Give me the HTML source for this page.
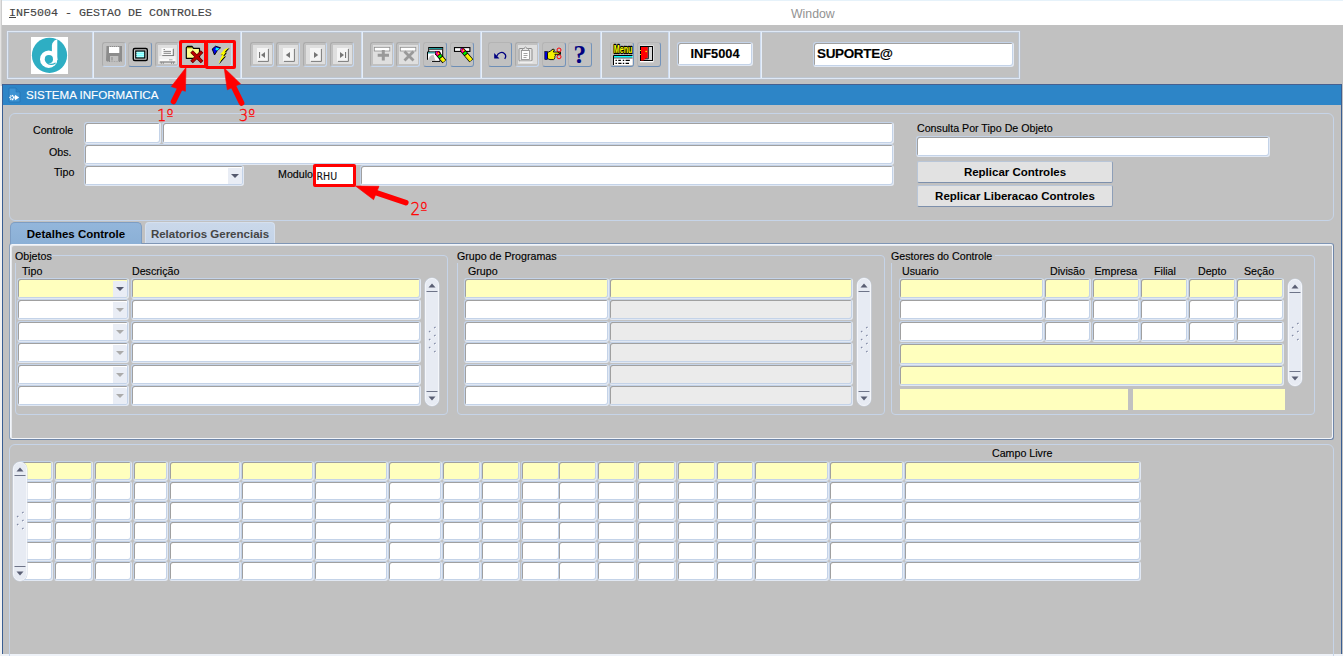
<!DOCTYPE html>
<html lang="pt-BR"><head><meta charset="utf-8"><title>INF5004 - GESTAO DE CONTROLES</title>
<style>
html,body{margin:0;padding:0}
body{width:1343px;height:656px;overflow:hidden;position:relative;background:#C1C1C1;font-family:"Liberation Sans",sans-serif;color:#000}
div,span,svg{position:absolute;box-sizing:border-box}
.t{white-space:nowrap;display:block;-webkit-text-stroke:.13px currentColor}
.f{background:#fff;border:1px solid;border-color:#C4D3E8 #E1E8F3 #E1E8F3 #C4D3E8;border-radius:3px;box-shadow:inset 1px 1px 0 #A0A0A0,inset -1px -1px 0 #C4D3E8}
.y{background:#FFFFBE}
.d{background:#EBEBEB}
.cb i{position:absolute;right:1px;top:2px;bottom:1px;width:14px;background:#E9EDF5;border-radius:0 2px 2px 0}
.cb i:after{content:"";position:absolute;left:3px;top:50%;margin-top:-2px;border:4px solid transparent;border-top:4.5px solid #555A6E;border-bottom:0}
.cb.dis i:after{border-top-color:#ABABAB}

.tb{border:1px solid;border-radius:3px;width:24px;height:25px;top:42px}
.tb.en{border-color:#B4B4B4 #7393BA #6D8EB6 #B4B4B4}
.tb.di{border-color:#ABABAB #C6D8F0 #C6D8F0 #ABABAB}
.tb.lt:before{content:"";position:absolute;left:2px;top:2px;right:1px;bottom:2px;background:#DFDFDF}
.tb svg{left:-1px;top:-1px}

</style></head><body>
<div class="" style="left:0px;top:0px;width:1343px;height:1px;background:#E6F2FA"></div>
<div class="" style="left:2px;top:1px;width:1341px;height:24px;background:#fff"></div>
<div class="" style="left:0px;top:0px;width:2px;height:86px;background:linear-gradient(90deg,#E3E3E3 55%,#CDCDCD 55%)"></div>
<div class="" style="left:0px;top:86px;width:2px;height:570px;background:#F2F2F2"></div>
<span class="t" style="left:9px;top:7.1px;font-family:'Liberation Mono',monospace;font-size:11.67px;line-height:12px;color:#444"><u>I</u>NF5004 - GESTAO DE CONTROLES</span>
<span class="t" style="left:791px;top:7.89px;font-size:12.3px;line-height:12.3px;color:#929292;-webkit-text-stroke:0">Window</span>
<div class="" style="left:7px;top:31px;width:1013px;height:48px;border:1px solid #DEE8F6;box-shadow:inset 0 0 0 1px rgba(185,203,230,.45),0 0 0 .5px rgba(185,203,230,.4)"></div>
<div class="" style="left:92px;top:32px;width:2px;height:46px;background:linear-gradient(90deg,#CFDCEF 50%,#E6EEF9 50%)"></div>
<div class="" style="left:240px;top:32px;width:2px;height:46px;background:linear-gradient(90deg,#CFDCEF 50%,#E6EEF9 50%)"></div>
<div class="" style="left:361px;top:32px;width:2px;height:46px;background:linear-gradient(90deg,#CFDCEF 50%,#E6EEF9 50%)"></div>
<div class="" style="left:480px;top:32px;width:2px;height:46px;background:linear-gradient(90deg,#CFDCEF 50%,#E6EEF9 50%)"></div>
<div class="" style="left:600px;top:32px;width:2px;height:46px;background:linear-gradient(90deg,#CFDCEF 50%,#E6EEF9 50%)"></div>
<div class="" style="left:668px;top:32px;width:2px;height:46px;background:linear-gradient(90deg,#CFDCEF 50%,#E6EEF9 50%)"></div>
<div class="" style="left:760px;top:32px;width:2px;height:46px;background:linear-gradient(90deg,#CFDCEF 50%,#E6EEF9 50%)"></div>
<div class="" style="left:31px;top:37px;width:37px;height:37px;background:#fff"></div>
<svg style="left:31px;top:37px" width="37" height="37" viewBox="0 0 37 37"><circle cx="18.5" cy="18.3" r="17.6" fill="#2EAEC3"/>
<circle cx="17.700" cy="22.200" r="8.700" fill="#fff"/>
<path d="M20.900 15V8.500c0-2.600 2-5 4.600-6 .4-.1.800-.1.800.3V23h-5.400z" fill="#fff"/>
<circle cx="17.900" cy="22.200" r="4.100" fill="#2EAEC3"/>
<path d="M15.800 25.600c2.200 2.300 6 2.100 8.300.6" fill="none" stroke="#2EAEC3" stroke-width="1.300" stroke-linecap="round"/></svg>
<div class="" style="left:2px;top:84px;width:1340px;height:572px;background:#3A5E92"></div>
<div class="" style="left:3px;top:84px;width:1338px;height:1px;background:#47608F"></div>
<div class="" style="left:3px;top:85px;width:1338px;height:20px;background:#2D85C7"></div>
<div class="" style="left:3px;top:105px;width:1338px;height:549px;background:#C1C1C1"></div>
<div class="" style="left:2px;top:654px;width:1341px;height:2px;background:linear-gradient(#C1C1C1 25%,#EEF2F8 25%)"></div>
<span class="t" style="left:26px;top:89.18px;font-size:11.6px;line-height:11.6px;color:#fff">SISTEMA INFORMATICA</span>
<svg style="left:7.500px;top:87px" width="14" height="16" viewBox="0 0 14 16"><path d="M1 1h7l4 4v10H1z" fill="#3C93D3" stroke="#2674B5" stroke-width=".8"/><path d="M8 1v4h4" fill="#2D85C7" stroke="#2674B5" stroke-width=".6"/><circle cx="4" cy="10.500" r="1.900" fill="none" stroke="#fff" stroke-width="1.700" stroke-dasharray="1.100 .5"/><path d="M7 7.800l4.200 2.700L7 13.200z" fill="#fff"/></svg>
<div class="b" style="left:9px;top:113px;width:1325px;height:108px;border:1px solid #C6D4E8;border-radius:6px;"></div>
<span class="t" style="left:33px;top:124.57px;font-size:10.67px;line-height:10.67px;">Controle</span>
<span class="t" style="left:49px;top:146.97px;font-size:10.67px;line-height:10.67px;">Obs.</span>
<span class="t" style="left:54px;top:166.97px;font-size:10.67px;line-height:10.67px;">Tipo</span>
<div class="f" style="left:84px;top:122px;width:77px;height:22px;"></div>
<div class="f" style="left:162px;top:122px;width:732px;height:22px;"></div>
<div class="f" style="left:84px;top:144px;width:810px;height:21px;"></div>
<div class="f cb" style="left:84px;top:165px;width:160px;height:21px;"><i></i></div>
<span class="t" style="left:278px;top:168.97px;font-size:10.67px;line-height:10.67px;">Modulo</span>
<div class="f" style="left:360px;top:165px;width:534px;height:21px;"></div>
<span class="t" style="left:917px;top:122.97px;font-size:10.67px;line-height:10.67px;">Consulta Por Tipo De Objeto</span>
<div class="f" style="left:916px;top:136px;width:354px;height:21px;"></div>
<div class="" style="left:917px;top:161px;width:196px;height:22px;background:#E2E2E2;border:1px solid;border-color:#B9C6D8 #8E9FB8 #7D90AC #B9C6D8;border-radius:2px;text-align:center;font-weight:bold;font-size:11.5px;line-height:20px;white-space:nowrap">Replicar Controles</div>
<div class="" style="left:917px;top:185px;width:196px;height:22px;background:#E2E2E2;border:1px solid;border-color:#B9C6D8 #8E9FB8 #7D90AC #B9C6D8;border-radius:2px;text-align:center;font-weight:bold;font-size:11.5px;line-height:20px;white-space:nowrap">Replicar Liberacao Controles</div>
<div class="" style="left:145px;top:222px;width:130px;height:21px;background:linear-gradient(#CAD8EA,#C3D3E8);border:1px solid #D5E0EF;border-bottom:0;border-radius:4px 4px 0 0;color:#454545;font-weight:bold;font-size:11.5px;line-height:22px;white-space:nowrap;text-align:center">Relatorios Gerenciais</div>
<div class="" style="left:9px;top:243px;width:1325px;height:197px;border:1px solid;border-color:#7F96B5 #6F86A8 #6F86A8 #8AA0BD;border-radius:3px;box-shadow:inset 1px 1px 0 #F2F5FA,inset -1px -1px 0 #F2F5FA,inset 2px 2px 0 rgba(240,244,250,.75)"></div>
<div class="" style="left:10px;top:222px;width:132px;height:22px;background:linear-gradient(#93B6DB,#8BB0D6);border:1px solid #7D9DC3;border-bottom:0;border-radius:5px 5px 0 0;font-weight:bold;font-size:11.5px;line-height:22px;white-space:nowrap;text-align:center">Detalhes Controle</div>
<div class="b" style="left:15px;top:255px;width:433px;height:160px;border:1px solid #C6D4E8;border-radius:4px;"></div>
<div class="b" style="left:457px;top:255px;width:428px;height:160px;border:1px solid #C6D4E8;border-radius:4px;"></div>
<div class="b" style="left:891px;top:255px;width:424px;height:160px;border:1px solid #C6D4E8;border-radius:4px;"></div>
<div class="" style="left:14px;top:251px;width:38px;height:12px;background:#C1C1C1"></div>
<span class="t" style="left:15px;top:250.97px;font-size:10.67px;line-height:10.67px;">Objetos</span>
<div class="" style="left:456px;top:251px;width:101px;height:12px;background:#C1C1C1"></div>
<span class="t" style="left:457px;top:250.97px;font-size:10.67px;line-height:10.67px;">Grupo de Programas</span>
<div class="" style="left:890px;top:251px;width:105px;height:12px;background:#C1C1C1"></div>
<span class="t" style="left:891px;top:250.97px;font-size:10.67px;line-height:10.67px;">Gestores do Controle</span>
<span class="t" style="left:22px;top:265.97px;font-size:10.67px;line-height:10.67px;">Tipo</span>
<span class="t" style="left:132px;top:265.97px;font-size:10.67px;line-height:10.67px;">Descrição</span>
<span class="t" style="left:468px;top:265.97px;font-size:10.67px;line-height:10.67px;">Grupo</span>
<span class="t" style="left:902px;top:265.97px;font-size:10.67px;line-height:10.67px;">Usuario</span>
<span class="t" style="left:1050px;top:265.97px;font-size:10.67px;line-height:10.67px;">Divisão</span>
<span class="t" style="left:1094.5px;top:265.97px;font-size:10.67px;line-height:10.67px;">Empresa</span>
<span class="t" style="left:1154px;top:265.97px;font-size:10.67px;line-height:10.67px;">Filial</span>
<span class="t" style="left:1198px;top:265.97px;font-size:10.67px;line-height:10.67px;">Depto</span>
<span class="t" style="left:1244px;top:265.97px;font-size:10.67px;line-height:10.67px;">Seção</span>
<div class="f cb y" style="left:17px;top:278px;width:112px;height:21px;"><i></i></div>
<div class="f y" style="left:131px;top:278px;width:290px;height:21px;"></div>
<div class="f y" style="left:464px;top:278px;width:145px;height:21px;"></div>
<div class="f y" style="left:609px;top:278px;width:244px;height:21px;"></div>
<div class="f cb dis" style="left:17px;top:299px;width:112px;height:21px;"><i></i></div>
<div class="f" style="left:131px;top:299px;width:290px;height:21px;"></div>
<div class="f" style="left:464px;top:299px;width:145px;height:21px;"></div>
<div class="f d" style="left:609px;top:299px;width:244px;height:21px;"></div>
<div class="f cb dis" style="left:17px;top:321px;width:112px;height:21px;"><i></i></div>
<div class="f" style="left:131px;top:321px;width:290px;height:21px;"></div>
<div class="f" style="left:464px;top:321px;width:145px;height:21px;"></div>
<div class="f d" style="left:609px;top:321px;width:244px;height:21px;"></div>
<div class="f cb dis" style="left:17px;top:342px;width:112px;height:21px;"><i></i></div>
<div class="f" style="left:131px;top:342px;width:290px;height:21px;"></div>
<div class="f" style="left:464px;top:342px;width:145px;height:21px;"></div>
<div class="f d" style="left:609px;top:342px;width:244px;height:21px;"></div>
<div class="f cb dis" style="left:17px;top:364px;width:112px;height:21px;"><i></i></div>
<div class="f" style="left:131px;top:364px;width:290px;height:21px;"></div>
<div class="f" style="left:464px;top:364px;width:145px;height:21px;"></div>
<div class="f d" style="left:609px;top:364px;width:244px;height:21px;"></div>
<div class="f cb dis" style="left:17px;top:385px;width:112px;height:21px;"><i></i></div>
<div class="f" style="left:131px;top:385px;width:290px;height:21px;"></div>
<div class="f" style="left:464px;top:385px;width:145px;height:21px;"></div>
<div class="f d" style="left:609px;top:385px;width:244px;height:21px;"></div>
<div class="f y" style="left:899px;top:278px;width:145px;height:21px;"></div>
<div class="f y" style="left:1044px;top:278px;width:47px;height:21px;"></div>
<div class="f y" style="left:1092px;top:278px;width:48px;height:21px;"></div>
<div class="f y" style="left:1140px;top:278px;width:48px;height:21px;"></div>
<div class="f y" style="left:1188px;top:278px;width:48px;height:21px;"></div>
<div class="f y" style="left:1236px;top:278px;width:48px;height:21px;"></div>
<div class="f" style="left:899px;top:299px;width:145px;height:21px;"></div>
<div class="f" style="left:1044px;top:299px;width:47px;height:21px;"></div>
<div class="f" style="left:1092px;top:299px;width:48px;height:21px;"></div>
<div class="f" style="left:1140px;top:299px;width:48px;height:21px;"></div>
<div class="f" style="left:1188px;top:299px;width:48px;height:21px;"></div>
<div class="f" style="left:1236px;top:299px;width:48px;height:21px;"></div>
<div class="f" style="left:899px;top:321px;width:145px;height:21px;"></div>
<div class="f" style="left:1044px;top:321px;width:47px;height:21px;"></div>
<div class="f" style="left:1092px;top:321px;width:48px;height:21px;"></div>
<div class="f" style="left:1140px;top:321px;width:48px;height:21px;"></div>
<div class="f" style="left:1188px;top:321px;width:48px;height:21px;"></div>
<div class="f" style="left:1236px;top:321px;width:48px;height:21px;"></div>
<div class="f y" style="left:899px;top:343px;width:385px;height:22px;"></div>
<div class="f y" style="left:899px;top:365px;width:385px;height:21px;"></div>
<div class="" style="left:900px;top:389px;width:228px;height:21px;background:#FFFFBE"></div>
<div class="" style="left:1133px;top:389px;width:152px;height:21px;background:#FFFFBE"></div>
<div class="" style="left:425px;top:278px;width:14px;height:128px;background:#E7EBF3;border:1px solid #F4F6FA;border-radius:7px;box-shadow:0 0 0 .5px #CDD6E4"><svg width="14" height="128" style="left:-1px;top:-1px"><path d="M3.5 9.500h7l-3.500-4z" fill="#5A5F74"/><path d="M1.500 13.500h11" stroke="#6E7488" stroke-width="1"/><path d="M3.5 118.5h7l-3.500 4z" fill="#5A5F74"/><path d="M1.500 113.5h11" stroke="#6E7488" stroke-width="1"/><path d="M10.0 50.89999999999998l1.300-1.300M10.0 58.89999999999998l1.300-1.300M10.0 66.89999999999998l1.300-1.300M10.0 74.89999999999998l1.300-1.300M4.8 54.89999999999998l1.300-1.300M4.8 62.89999999999998l1.300-1.300M4.8 70.89999999999998l1.300-1.300" stroke="#fff" stroke-width="1"/><path d="M9.2 50.09999999999998l1.300-1.300M9.2 58.09999999999998l1.300-1.300M9.2 66.09999999999998l1.300-1.300M9.2 74.09999999999998l1.300-1.300M4.0 54.09999999999998l1.300-1.300M4.0 62.09999999999998l1.300-1.300M4.0 70.09999999999998l1.300-1.300" stroke="#7C84A0" stroke-width="1.100"/></svg></div>
<div class="" style="left:857px;top:278px;width:14px;height:128px;background:#E7EBF3;border:1px solid #F4F6FA;border-radius:7px;box-shadow:0 0 0 .5px #CDD6E4"><svg width="14" height="128" style="left:-1px;top:-1px"><path d="M3.5 9.500h7l-3.500-4z" fill="#5A5F74"/><path d="M1.500 13.500h11" stroke="#6E7488" stroke-width="1"/><path d="M3.5 118.5h7l-3.500 4z" fill="#5A5F74"/><path d="M1.500 113.5h11" stroke="#6E7488" stroke-width="1"/><path d="M10.0 50.89999999999998l1.300-1.300M10.0 58.89999999999998l1.300-1.300M10.0 66.89999999999998l1.300-1.300M10.0 74.89999999999998l1.300-1.300M4.8 54.89999999999998l1.300-1.300M4.8 62.89999999999998l1.300-1.300M4.8 70.89999999999998l1.300-1.300" stroke="#fff" stroke-width="1"/><path d="M9.2 50.09999999999998l1.300-1.300M9.2 58.09999999999998l1.300-1.300M9.2 66.09999999999998l1.300-1.300M9.2 74.09999999999998l1.300-1.300M4.0 54.09999999999998l1.300-1.300M4.0 62.09999999999998l1.300-1.300M4.0 70.09999999999998l1.300-1.300" stroke="#7C84A0" stroke-width="1.100"/></svg></div>
<div class="" style="left:1288px;top:279px;width:14px;height:107px;background:#E7EBF3;border:1px solid #F4F6FA;border-radius:7px;box-shadow:0 0 0 .5px #CDD6E4"><svg width="14" height="107" style="left:-1px;top:-1px"><path d="M3.5 9.500h7l-3.500-4z" fill="#5A5F74"/><path d="M1.500 13.500h11" stroke="#6E7488" stroke-width="1"/><path d="M3.5 97.5h7l-3.500 4z" fill="#5A5F74"/><path d="M1.500 92.5h11" stroke="#6E7488" stroke-width="1"/><path d="M10.0 46.0l1.300-1.300M10.0 54.0l1.300-1.300M10.0 62.0l1.300-1.300M4.8 50.0l1.300-1.300M4.8 58.0l1.300-1.300" stroke="#fff" stroke-width="1"/><path d="M9.2 45.2l1.300-1.300M9.2 53.2l1.300-1.300M9.2 61.2l1.300-1.300M4.0 49.2l1.300-1.300M4.0 57.2l1.300-1.300" stroke="#7C84A0" stroke-width="1.100"/></svg></div>
<div class="b" style="left:9px;top:444px;width:1325px;height:216px;border:1px solid #C6D4E8;border-radius:6px 6px 0 0"></div>
<span class="t" style="left:992px;top:447.97px;font-size:10.67px;line-height:10.67px;">Campo Livre</span>
<div class="f y" style="left:19px;top:461px;width:34px;height:20px;"></div>
<div class="f y" style="left:54px;top:461px;width:39px;height:20px;"></div>
<div class="f y" style="left:94px;top:461px;width:38px;height:20px;"></div>
<div class="f y" style="left:133px;top:461px;width:35px;height:20px;"></div>
<div class="f y" style="left:169px;top:461px;width:72px;height:20px;"></div>
<div class="f y" style="left:241px;top:461px;width:73px;height:20px;"></div>
<div class="f y" style="left:314px;top:461px;width:74px;height:20px;"></div>
<div class="f y" style="left:388px;top:461px;width:54px;height:20px;"></div>
<div class="f y" style="left:442px;top:461px;width:39px;height:20px;"></div>
<div class="f y" style="left:481px;top:461px;width:39px;height:20px;"></div>
<div class="f y" style="left:521px;top:461px;width:39px;height:20px;"></div>
<div class="f y" style="left:558px;top:461px;width:39px;height:20px;"></div>
<div class="f y" style="left:597px;top:461px;width:39px;height:20px;"></div>
<div class="f y" style="left:637px;top:461px;width:39px;height:20px;"></div>
<div class="f y" style="left:677px;top:461px;width:39px;height:20px;"></div>
<div class="f y" style="left:716px;top:461px;width:38px;height:20px;"></div>
<div class="f y" style="left:754px;top:461px;width:75px;height:20px;"></div>
<div class="f y" style="left:829px;top:461px;width:75px;height:20px;"></div>
<div class="f y" style="left:904px;top:461px;width:237px;height:20px;"></div>
<div class="f" style="left:19px;top:481px;width:34px;height:20px;"></div>
<div class="f" style="left:54px;top:481px;width:39px;height:20px;"></div>
<div class="f" style="left:94px;top:481px;width:38px;height:20px;"></div>
<div class="f" style="left:133px;top:481px;width:35px;height:20px;"></div>
<div class="f" style="left:169px;top:481px;width:72px;height:20px;"></div>
<div class="f" style="left:241px;top:481px;width:73px;height:20px;"></div>
<div class="f" style="left:314px;top:481px;width:74px;height:20px;"></div>
<div class="f" style="left:388px;top:481px;width:54px;height:20px;"></div>
<div class="f" style="left:442px;top:481px;width:39px;height:20px;"></div>
<div class="f" style="left:481px;top:481px;width:39px;height:20px;"></div>
<div class="f" style="left:521px;top:481px;width:39px;height:20px;"></div>
<div class="f" style="left:558px;top:481px;width:39px;height:20px;"></div>
<div class="f" style="left:597px;top:481px;width:39px;height:20px;"></div>
<div class="f" style="left:637px;top:481px;width:39px;height:20px;"></div>
<div class="f" style="left:677px;top:481px;width:39px;height:20px;"></div>
<div class="f" style="left:716px;top:481px;width:38px;height:20px;"></div>
<div class="f" style="left:754px;top:481px;width:75px;height:20px;"></div>
<div class="f" style="left:829px;top:481px;width:75px;height:20px;"></div>
<div class="f" style="left:904px;top:481px;width:237px;height:20px;"></div>
<div class="f" style="left:19px;top:501px;width:34px;height:20px;"></div>
<div class="f" style="left:54px;top:501px;width:39px;height:20px;"></div>
<div class="f" style="left:94px;top:501px;width:38px;height:20px;"></div>
<div class="f" style="left:133px;top:501px;width:35px;height:20px;"></div>
<div class="f" style="left:169px;top:501px;width:72px;height:20px;"></div>
<div class="f" style="left:241px;top:501px;width:73px;height:20px;"></div>
<div class="f" style="left:314px;top:501px;width:74px;height:20px;"></div>
<div class="f" style="left:388px;top:501px;width:54px;height:20px;"></div>
<div class="f" style="left:442px;top:501px;width:39px;height:20px;"></div>
<div class="f" style="left:481px;top:501px;width:39px;height:20px;"></div>
<div class="f" style="left:521px;top:501px;width:39px;height:20px;"></div>
<div class="f" style="left:558px;top:501px;width:39px;height:20px;"></div>
<div class="f" style="left:597px;top:501px;width:39px;height:20px;"></div>
<div class="f" style="left:637px;top:501px;width:39px;height:20px;"></div>
<div class="f" style="left:677px;top:501px;width:39px;height:20px;"></div>
<div class="f" style="left:716px;top:501px;width:38px;height:20px;"></div>
<div class="f" style="left:754px;top:501px;width:75px;height:20px;"></div>
<div class="f" style="left:829px;top:501px;width:75px;height:20px;"></div>
<div class="f" style="left:904px;top:501px;width:237px;height:20px;"></div>
<div class="f" style="left:19px;top:521px;width:34px;height:20px;"></div>
<div class="f" style="left:54px;top:521px;width:39px;height:20px;"></div>
<div class="f" style="left:94px;top:521px;width:38px;height:20px;"></div>
<div class="f" style="left:133px;top:521px;width:35px;height:20px;"></div>
<div class="f" style="left:169px;top:521px;width:72px;height:20px;"></div>
<div class="f" style="left:241px;top:521px;width:73px;height:20px;"></div>
<div class="f" style="left:314px;top:521px;width:74px;height:20px;"></div>
<div class="f" style="left:388px;top:521px;width:54px;height:20px;"></div>
<div class="f" style="left:442px;top:521px;width:39px;height:20px;"></div>
<div class="f" style="left:481px;top:521px;width:39px;height:20px;"></div>
<div class="f" style="left:521px;top:521px;width:39px;height:20px;"></div>
<div class="f" style="left:558px;top:521px;width:39px;height:20px;"></div>
<div class="f" style="left:597px;top:521px;width:39px;height:20px;"></div>
<div class="f" style="left:637px;top:521px;width:39px;height:20px;"></div>
<div class="f" style="left:677px;top:521px;width:39px;height:20px;"></div>
<div class="f" style="left:716px;top:521px;width:38px;height:20px;"></div>
<div class="f" style="left:754px;top:521px;width:75px;height:20px;"></div>
<div class="f" style="left:829px;top:521px;width:75px;height:20px;"></div>
<div class="f" style="left:904px;top:521px;width:237px;height:20px;"></div>
<div class="f" style="left:19px;top:541px;width:34px;height:20px;"></div>
<div class="f" style="left:54px;top:541px;width:39px;height:20px;"></div>
<div class="f" style="left:94px;top:541px;width:38px;height:20px;"></div>
<div class="f" style="left:133px;top:541px;width:35px;height:20px;"></div>
<div class="f" style="left:169px;top:541px;width:72px;height:20px;"></div>
<div class="f" style="left:241px;top:541px;width:73px;height:20px;"></div>
<div class="f" style="left:314px;top:541px;width:74px;height:20px;"></div>
<div class="f" style="left:388px;top:541px;width:54px;height:20px;"></div>
<div class="f" style="left:442px;top:541px;width:39px;height:20px;"></div>
<div class="f" style="left:481px;top:541px;width:39px;height:20px;"></div>
<div class="f" style="left:521px;top:541px;width:39px;height:20px;"></div>
<div class="f" style="left:558px;top:541px;width:39px;height:20px;"></div>
<div class="f" style="left:597px;top:541px;width:39px;height:20px;"></div>
<div class="f" style="left:637px;top:541px;width:39px;height:20px;"></div>
<div class="f" style="left:677px;top:541px;width:39px;height:20px;"></div>
<div class="f" style="left:716px;top:541px;width:38px;height:20px;"></div>
<div class="f" style="left:754px;top:541px;width:75px;height:20px;"></div>
<div class="f" style="left:829px;top:541px;width:75px;height:20px;"></div>
<div class="f" style="left:904px;top:541px;width:237px;height:20px;"></div>
<div class="f" style="left:19px;top:561px;width:34px;height:20px;"></div>
<div class="f" style="left:54px;top:561px;width:39px;height:20px;"></div>
<div class="f" style="left:94px;top:561px;width:38px;height:20px;"></div>
<div class="f" style="left:133px;top:561px;width:35px;height:20px;"></div>
<div class="f" style="left:169px;top:561px;width:72px;height:20px;"></div>
<div class="f" style="left:241px;top:561px;width:73px;height:20px;"></div>
<div class="f" style="left:314px;top:561px;width:74px;height:20px;"></div>
<div class="f" style="left:388px;top:561px;width:54px;height:20px;"></div>
<div class="f" style="left:442px;top:561px;width:39px;height:20px;"></div>
<div class="f" style="left:481px;top:561px;width:39px;height:20px;"></div>
<div class="f" style="left:521px;top:561px;width:39px;height:20px;"></div>
<div class="f" style="left:558px;top:561px;width:39px;height:20px;"></div>
<div class="f" style="left:597px;top:561px;width:39px;height:20px;"></div>
<div class="f" style="left:637px;top:561px;width:39px;height:20px;"></div>
<div class="f" style="left:677px;top:561px;width:39px;height:20px;"></div>
<div class="f" style="left:716px;top:561px;width:38px;height:20px;"></div>
<div class="f" style="left:754px;top:561px;width:75px;height:20px;"></div>
<div class="f" style="left:829px;top:561px;width:75px;height:20px;"></div>
<div class="f" style="left:904px;top:561px;width:237px;height:20px;"></div>
<div class="" style="left:13px;top:462px;width:14px;height:119px;background:#E7EBF3;border:1px solid #F4F6FA;border-radius:7px;box-shadow:0 0 0 .5px #CDD6E4"><svg width="14" height="119" style="left:-1px;top:-1px"><path d="M3.5 9.500h7l-3.500-4z" fill="#5A5F74"/><path d="M1.500 13.500h11" stroke="#6E7488" stroke-width="1"/><path d="M3.5 109.5h7l-3.500 4z" fill="#5A5F74"/><path d="M1.500 104.5h11" stroke="#6E7488" stroke-width="1"/><path d="M10.0 52.0l1.300-1.300M10.0 60.0l1.300-1.300M10.0 68.0l1.300-1.300M4.8 56.0l1.300-1.300M4.8 64.0l1.300-1.300" stroke="#fff" stroke-width="1"/><path d="M9.2 51.2l1.300-1.300M9.2 59.2l1.300-1.300M9.2 67.2l1.300-1.300M4.0 55.2l1.300-1.300M4.0 63.2l1.300-1.300" stroke="#7C84A0" stroke-width="1.100"/></svg></div>
<div class="tb di" style="left:102px"><svg width="24" height="25" viewBox="0 0 24 25"><path d="M4.500 4h15.500v16h-14.500l-1.500-1.500z" fill="#8C8C8C"/><rect x="7" y="5" width="10.300" height="6" fill="#fff"/><path d="M7 4.400h10.300" stroke="#C3C3C3" stroke-width=".8" stroke-dasharray="1 1"/><rect x="8" y="14" width="8.300" height="5.500" fill="#C0C0C0"/><rect x="9.300" y="15" width="1.400" height="3.500" fill="#9A9A9A"/><path d="M5.500 19.600h14" stroke="#C3C3C3" stroke-width=".7" stroke-dasharray="1.500 1"/></svg></div>
<div class="tb en" style="left:128px"><svg width="24" height="25" viewBox="0 0 24 25"><rect x="5.300" y="6.500" width="14" height="12" rx="1.500" fill="#C8C8C8" stroke="#000" stroke-width="1.400"/><rect x="7.800" y="9" width="9" height="7" fill="#7FF" stroke="#000" stroke-width="1.200"/><path d="M8.500 10.500h7.600M8.500 12.500h7.600M8.500 14.500h7.600" stroke="#fff" stroke-width=".9" stroke-dasharray="1 1"/></svg></div>
<div class="tb di lt" style="left:155px"><svg width="24" height="25" viewBox="0 0 24 25"><rect x="6.500" y="6" width="11.500" height="7.300" fill="#FAFAFA"/><path d="M18.300 6.800v7M7.300 13.700h11.500" stroke="#6E6E6E" stroke-width="1" fill="none"/><path d="M8.500 7.500h1.500" stroke="#6E6E6E" stroke-width=".8"/><path d="M8.500 9.400h7.500M8.500 11.300h7.500" stroke="#777" stroke-width=".9"/><rect x="4.300" y="14.300" width="16.300" height="5.200" fill="#FAFAFA"/><path d="M4.300 16h16.300" stroke="#E4E4E4" stroke-width=".8"/><path d="M4.800 20h15.400" stroke="#6E6E6E" stroke-width="1"/><path d="M6.300 20.500v1.200M8.300 20.500v1.200M16.500 20.500v1.200M18.500 20.500v1.200" stroke="#777" stroke-width="1"/><path d="M14 17.800h3.500" stroke="#A8A8A8" stroke-width="1"/></svg></div>
<div class="tb di" style="left:181px"><svg width="24" height="25" viewBox="0 0 24 25"><path d="M5.300 16.300V5.800l1.200-1.500h4.500l1.500 2h6v10z" fill="#FFFF8C" stroke="#000" stroke-width="1.200" stroke-linejoin="round"/><path d="M6.300 5h4.400l.8 1.200H6z" fill="#808000"/><path d="M11.800 10.800l8 8M19.800 10.800l-8 8" stroke="#3A0000" stroke-width="3.600" stroke-linecap="square"/><path d="M11.800 10.800l8 8M19.800 10.800l-8 8" stroke="#B80000" stroke-width="2.700" stroke-linecap="square"/></svg></div>
<div class="tb di" style="left:208px"><svg width="24" height="25" viewBox="0 0 24 25"><path d="M4.200 7l3.400-2.800 5 1.600-3.200 2.700-2.900 4.500z" fill="#0000F0" stroke="#000" stroke-width=".9" stroke-linejoin="round"/><path d="M8 5.400l3.600 1-2.400 2-1.800-.6z" fill="#0FF"/><path d="M21.700 6.100l-4.500 2-4.300 5.200 2.600-.5-4.300 9.500 6.900-8-2.200.4 3.200-4.100-1.800.3z" fill="#000"/><path d="M20.800 5.600l-4.500 2-4.300 5.200 2.600-.5-4.300 9.500 6.900-8-2.200.4 3.200-4.100-1.800.3z" fill="#FFFF00"/></svg></div>
<div class="tb di lt" style="left:250px"><svg width="24" height="25" viewBox="0 0 24 25"><rect x="7" y="6" width="11" height="13" fill="#F5F5F5"/><path d="M18.400 7v12.400H8" fill="none" stroke="#6E6E6E" stroke-width=".9"/><rect x="9" y="10" width="1.100" height="6" fill="#767676"/><path d="M15 10v6l-4-3z" fill="#767676"/></svg></div>
<div class="tb di lt" style="left:276px"><svg width="24" height="25" viewBox="0 0 24 25"><rect x="7" y="6" width="11" height="13" fill="#F5F5F5"/><path d="M18.400 7v12.400H8" fill="none" stroke="#6E6E6E" stroke-width=".9"/><path d="M14 10v6l-4.200-3z" fill="#767676"/></svg></div>
<div class="tb di lt" style="left:303px"><svg width="24" height="25" viewBox="0 0 24 25"><rect x="7" y="6" width="11" height="13" fill="#F5F5F5"/><path d="M18.400 7v12.400H8" fill="none" stroke="#6E6E6E" stroke-width=".9"/><path d="M11 10v6l4.200-3z" fill="#767676"/></svg></div>
<div class="tb di lt" style="left:330px"><svg width="24" height="25" viewBox="0 0 24 25"><rect x="7" y="6" width="11" height="13" fill="#F5F5F5"/><path d="M18.400 7v12.400H8" fill="none" stroke="#6E6E6E" stroke-width=".9"/><rect x="15" y="10" width="1.100" height="6" fill="#767676"/><path d="M10 10v6l4-3z" fill="#767676"/></svg></div>
<div class="tb di lt" style="left:370px"><svg width="24" height="25" viewBox="0 0 24 25"><rect x="4.300" y="5.300" width="15.500" height="3.700" fill="#fff" stroke="#8C8C8C" stroke-width=".8"/><path d="M7.700 13.300h11.300M13.300 8v10.500" stroke="#999" stroke-width="3"/></svg></div>
<div class="tb di lt" style="left:396px"><svg width="24" height="25" viewBox="0 0 24 25"><rect x="4.300" y="5.300" width="15.500" height="3.700" fill="#fff" stroke="#8C8C8C" stroke-width=".8"/><path d="M8.500 9.500l9 9M17.500 9.500l-9 9" stroke="#999" stroke-width="2.800"/></svg></div>
<div class="tb en" style="left:423px"><svg width="24" height="25" viewBox="0 0 24 25"><rect x="5.700" y="5.500" width="14" height="9" fill="#fff" stroke="#000" stroke-width="1"/><rect x="6.200" y="6.100" width="13" height="1" fill="#008C8C"/><path d="M6.200 7.600h13" stroke="#000" stroke-width=".7"/><path d="M4.500 17.800V9.900h12.500v9.500H9" fill="#fff" stroke="#000" stroke-width="1"/><rect x="5" y="10.400" width="11.500" height="1" fill="#00A0A0"/><path d="M5 18.500c.5-3.500 2.500-5.500 5.500-6l2 6.500H5z" fill="#C3C3C3"/><g transform="translate(12.7 9.2) rotate(50)"><path d="M-.3 0L2 -2.500H13.5v5H2z" fill="#000"/><path d="M.4 0L1.900 -1.500v3z" fill="#F0F"/><rect x="1.900" y="-1.700" width="3" height="3.400" fill="#F00"/><rect x="2.300" y=".2" width="2.200" height="1.200" fill="#F0F"/><rect x="2.600" y="-1.200" width="1.600" height="1" fill="#FF0"/><rect x="5.300" y="-1.700" width="2.500" height="3.400" fill="#0E0"/><rect x="8.600" y="-1.700" width="4.5" height="3.400" fill="#FF0"/><path d="M9 .6H12.9" stroke="#E8D800" stroke-width=".8"/></g></svg></div>
<div class="tb en" style="left:450px"><svg width="24" height="25" viewBox="0 0 24 25"><rect x="4.500" y="5.600" width="15.400" height="3.800" fill="#fff" stroke="#000" stroke-width="1.100"/><g transform="translate(10.8 6.2) rotate(50)"><path d="M-.3 0L2 -2.500H16.4v5H2z" fill="#000"/><path d="M.4 0L1.900 -1.500v3z" fill="#F0F"/><rect x="1.900" y="-1.700" width="3" height="3.400" fill="#F00"/><rect x="2.300" y=".2" width="2.200" height="1.200" fill="#F0F"/><rect x="2.600" y="-1.200" width="1.600" height="1" fill="#FF0"/><rect x="5.300" y="-1.700" width="2.500" height="3.400" fill="#0E0"/><rect x="8.600" y="-1.700" width="7.399999999999999" height="3.400" fill="#FF0"/><path d="M9 .6H15.799999999999999" stroke="#E8D800" stroke-width=".8"/></g></svg></div>
<div class="tb en" style="left:488px"><svg width="24" height="25" viewBox="0 0 24 25"><path d="M6.200 11v5.600h5.200z" fill="#000080"/><path d="M8.800 14c1.500-3.200 5-4.600 7.500-2.600 1.700 1.400 1.700 3.600.4 5.500" fill="none" stroke="#000080" stroke-width="1.300"/></svg></div>
<div class="tb di lt" style="left:515px"><svg width="24" height="25" viewBox="0 0 24 25"><rect x="4" y="6.500" width="13" height="12.500" rx="1" fill="#E6E6E6" stroke="#8C8C8C" stroke-width="1"/><rect x="6.500" y="8.500" width="8" height="9" fill="#fff" stroke="#8C8C8C" stroke-width=".8"/><path d="M7.500 8.500V6.500h1.800c0-2 2.400-2 2.400 0h1.800v2z" fill="#E6E6E6" stroke="#8C8C8C" stroke-width=".8"/><path d="M8.500 11.500h4M8.500 13.500h4M8.500 15.500h3" stroke="#8C8C8C" stroke-width=".8"/><path d="M5 20h12.500" stroke="#fff" stroke-width="1"/></svg></div>
<div class="tb en" style="left:542px"><svg width="24" height="25" viewBox="0 0 24 25"><rect x="2.800" y="9.500" width="2.600" height="8" fill="#0000E0" stroke="#000" stroke-width=".6"/><path d="M5.500 10.500l3-1.500 2.500-2 1.500.8-1.200 2.200h7v2.300h-5.500c.8.500.8 1.500 0 2 .5.600.3 1.400-.4 1.800.3.700-.2 1.500-1 1.500H8l-2.500-1z" fill="#F4F000" stroke="#000" stroke-width=".9" stroke-linejoin="round"/><circle cx="17" cy="8" r="2" fill="none" stroke="#F00" stroke-width="1"/><circle cx="17" cy="14.800" r="2" fill="none" stroke="#F00" stroke-width="1"/><path d="M15.500 9.800l3.500 2.500M15.500 13l3.500-2.500" stroke="#000" stroke-width=".8"/></svg></div>
<div class="tb en" style="left:568px"><span class="t" style="left:4.500px;top:-1.500px;font-family:'Liberation Serif',serif;font-weight:bold;font-size:25px;line-height:25px;color:#000080">?</span></div>
<div class="tb en" style="left:610px"><svg width="24" height="25" viewBox="0 0 24 25"><text x="3.800" y="11" font-family="Liberation Sans, sans-serif" font-weight="bold" font-size="10.500" fill="#FF0" stroke="#000" stroke-width="2.300" paint-order="stroke" stroke-linejoin="round" textLength="18.500" lengthAdjust="spacingAndGlyphs">Menu</text><rect x="3.500" y="13.500" width="19" height="9.500" fill="#fff"/><path d="M3.500 23V13.500h19" fill="none" stroke="#000" stroke-width="1"/><rect x="4" y="14" width="18.500" height="1.500" fill="#0FF"/><path d="M4 16h18.500" stroke="#000" stroke-width=".7"/><path d="M5.500 18.300h1.400M8.300 18.300h2.600M12.800 18.300h1.400M15.600 18.300h4.200M5.500 21.300h1.400M8.300 21.300h3.200M12.800 21.300h1.400M15.600 21.300h3.400" stroke="#000" stroke-width="1.200"/></svg></div>
<div class="tb en" style="left:637px"><svg width="24" height="25" viewBox="0 0 24 25"><rect x="3" y="3.500" width="13.500" height="16.800" fill="#fff"/><rect x="3.500" y="4.500" width="12" height="14" fill="#D8D8D8" stroke="#000" stroke-width="1"/><path d="M4 5h6.800v10.800l-1.800.6-.5 1.100-1.500.3-.5.700H4z" fill="#F00"/><path d="M11.300 5v11.800H8.500" fill="none" stroke="#000" stroke-width=".9"/><rect x="8.500" y="8.800" width="1.300" height="1.300" fill="#FF0"/><path d="M3 8.500h1M3 12.500h1" stroke="#FF0" stroke-width=".9"/></svg></div>
<div class="f" style="left:677px;top:42px;width:76px;height:24px;"><span class="t" style="left:0;right:0;top:4px;text-align:center;font-weight:bold;font-size:12.8px;line-height:13px;top:4.300px">INF5004</span></div>
<div class="f" style="left:813px;top:42px;width:201px;height:25px;"><span class="t" style="left:3px;top:4px;font-weight:bold;font-size:13.5px;letter-spacing:-.35px;line-height:14px">SUPORTE@</span></div>
<div class="" style="left:315px;top:166px;width:39px;height:19px;background:#fff"></div>
<span class="t" style="left:316.5px;top:171px;font-family:'DejaVu Sans Condensed','DejaVu Sans',sans-serif;font-size:10.5px;line-height:11px;color:#111">RHU</span>
<div class="" style="left:179px;top:40px;width:28px;height:28px;border:3px solid #FF0000;border-radius:2px"></div>
<div class="" style="left:205px;top:40px;width:31px;height:29px;border:3px solid #FF0000;border-radius:2px"></div>
<div class="" style="left:313px;top:164px;width:43px;height:23px;border:3px solid #FF0000;border-radius:2px"></div>
<svg style="left:0;top:0" width="1343" height="656" viewBox="0 0 1343 656">
<g fill="#FF0000" stroke="#FF0000">
<path d="M186 67.500L171.300 86.600 185.400 91.300z" stroke-width=".6"/><path d="M180.200 88L173.500 101.500" stroke-width="5.600" stroke-linecap="round" fill="none"/>
<path d="M224.200 68L227.300 89.800 240.500 83.800z" stroke-width=".6"/><path d="M233 85.500L241.600 103" stroke-width="5.600" stroke-linecap="round" fill="none"/>
<path d="M355.500 186L379 186.300 373.600 199.700z" stroke-width=".6"/><path d="M376 192.600L405.800 202.600" stroke-width="5.600" stroke-linecap="round" fill="none"/>
</g>
<g fill="#FF0000" stroke="#FF0000" stroke-width=".35" font-family="DejaVu Sans Light, DejaVu Sans, sans-serif" font-weight="200" font-size="16.500">
<text x="157" y="120.600" textLength="16.500" lengthAdjust="spacingAndGlyphs">1º</text><text x="238.800" y="120.600" textLength="16.500" lengthAdjust="spacingAndGlyphs">3º</text><text x="410.500" y="214.800" font-size="17.500" textLength="17" lengthAdjust="spacingAndGlyphs">2º</text>
</g></svg>
</body></html>
